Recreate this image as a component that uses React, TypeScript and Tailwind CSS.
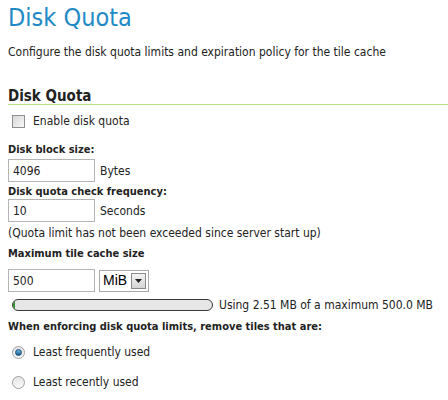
import React from "react";

const font = { fontFamily: '"DejaVu Sans Condensed", "DejaVu Sans", sans-serif' };

function TextBox({ value }: { value: string }) {
  return (
    <input
      readOnly
      value={value}
      className="w-[87px] h-[23px] border border-[#b4b4b4] bg-white px-[4px] text-[12px] text-[#222] outline-none"
    />
  );
}

function Radio({ checked }: { checked?: boolean }) {
  return (
    <span className="w-[13px] h-[13px] rounded-full border border-[#a0a0a0] bg-gradient-to-b from-[#e4e4e4] to-[#fafafa] flex items-center justify-center">
      {checked && <span className="w-[7px] h-[7px] rounded-full bg-gradient-to-b from-[#6cb6e6] to-[#1c5c8c] border border-[#1d4e73]" />}
    </span>
  );
}

export default function App() {
  return (
    <div className="w-[448px] h-[400px] bg-white overflow-hidden px-[8px] text-[12px] text-[#222]" style={font}>
      <h1 className="text-[25px] leading-[34px] pt-[1px] text-[#1f8ac6] font-normal">Disk Quota</h1>
      <p className="mt-[9px] text-[12px] leading-[16px]">
        Configure the disk quota limits and expiration policy for the tile cache
      </p>

      <h2 className="mt-[28px] text-[15px] leading-[16px] font-bold border-b border-[#b9de86] -mr-[8px]">
        Disk Quota
      </h2>

      <label className="mt-[8px] flex items-center gap-[8px] pl-[4px] leading-[16px]">
        <span className="w-[13px] h-[13px] border border-[#8f8f8f] bg-gradient-to-br from-[#d8d8d8] to-[#f8f8f8]" />
        <span>Enable disk quota</span>
      </label>

      <div className="mt-[14px] font-bold text-[11px] leading-[14px]">Disk block size:</div>
      <div className="mt-[2px] flex items-center gap-[5px]">
        <TextBox value="4096" />
        <span>Bytes</span>
      </div>

      <div className="mt-[3px] font-bold text-[11px] leading-[14px]">Disk quota check frequency:</div>
      <div className="mt-0 flex items-center gap-[5px]">
        <TextBox value="10" />
        <span>Seconds</span>
      </div>
      <div className="mt-[3px] leading-[16px]">(Quota limit has not been exceeded since server start up)</div>

      <div className="mt-[6px] font-bold text-[11px] leading-[14px]">Maximum tile cache size</div>
      <div className="mt-[8px] flex items-center gap-[4px]">
        <TextBox value="500" />
        <div className="h-[22px] w-[50px] border border-[#a8a8a8] bg-white flex items-center justify-between pl-[3px] pr-[2px]">
          <span className="text-[14px] text-black" style={{ fontFamily: '"Liberation Sans", sans-serif' }}>MiB</span>
          <span className="w-[15px] h-[16px] border border-[#8a8a8a] bg-gradient-to-b from-[#f4f4f4] to-[#d4d4d4] flex items-center justify-center">
            <svg width="7" height="4" viewBox="0 0 7 4"><path d="M0 0h7L3.5 4z" fill="#222" /></svg>
          </span>
        </div>
      </div>

      <div className="mt-[5px] flex items-center gap-[6px] pl-[4px] leading-[16px]">
        <div className="w-[201px] h-[12px] rounded-full border border-[#3a3a3a] bg-[#e6e6e6] overflow-hidden">
          <div className="h-full w-[2px] bg-[#2e8b2e]" />
        </div>
        <span>Using 2.51 MB of a maximum 500.0 MB</span>
      </div>

      <div className="mt-[7px] font-bold text-[11px] leading-[14px]">When enforcing disk quota limits, remove tiles that are:</div>

      <label className="mt-[10px] flex items-center gap-[8px] pl-[4px] leading-[16px]">
        <Radio checked />
        <span>Least frequently used</span>
      </label>
      <label className="mt-[14px] flex items-center gap-[8px] pl-[4px] leading-[16px]">
        <Radio />
        <span>Least recently used</span>
      </label>
    </div>
  );
}
